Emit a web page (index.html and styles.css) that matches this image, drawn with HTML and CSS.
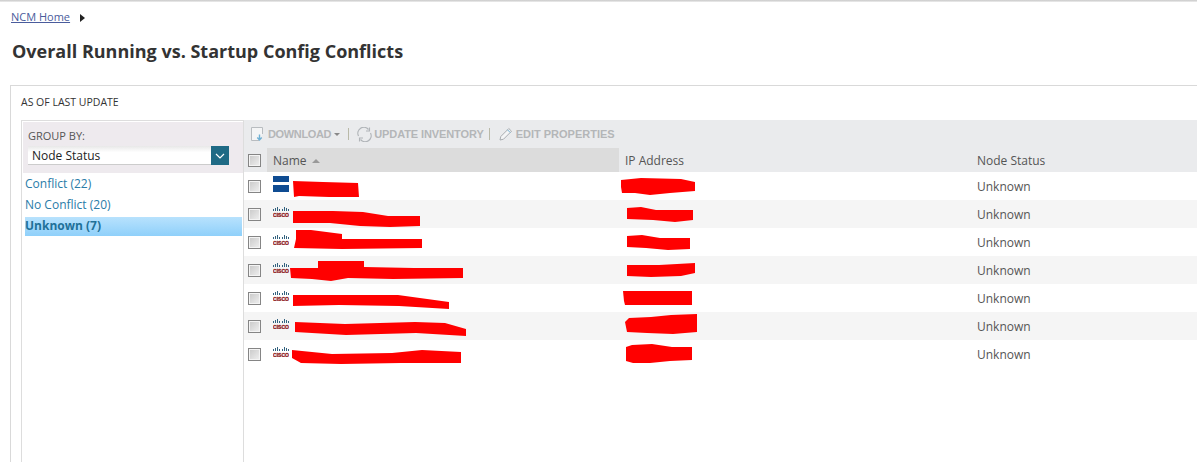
FILE: index.html
```html
<!DOCTYPE html>
<html lang="en">
<head>
    <meta charset="UTF-8">
    <title>Overall Running vs. Startup Config Conflicts</title>
    <link rel="stylesheet" href="styles.css">
</head>

<body>
    <div class="topline"></div>
    <div class="breadcrumb">
        <a href="#">NCM Home</a>
        <span class="crumb-arrow"></span>
    </div>
    <h1>Overall Running vs. Startup Config Conflicts</h1>

    <div class="panel">
        <div class="panel-title">AS OF LAST UPDATE</div>
        <div class="panel-body">
            <div class="group-col">
                <div class="group-head">
                    <label>GROUP BY:</label>
                    <div class="select">
                        <span class="select-value">Node Status</span>
                        <span class="select-btn">
                            <svg width="10" height="6" viewBox="0 0 10 6"><path d="M1 1l4 4 4-4" fill="none" stroke="#fff" stroke-width="1.2"/></svg>
                        </span>
                    </div>
                </div>
                <ul class="group-list">
                    <li>Conflict (22)</li>
                    <li>No Conflict (20)</li>
                    <li class="selected">Unknown (7)</li>
                </ul>
            </div>

            <div class="grid-col">
                <div class="toolbar">
                    <span class="tool tool-download">
                        <svg width="14" height="15" viewBox="0 0 14 15"><path d="M8 13.500H.5v-13h11V7" fill="#f4f5f6" stroke="#b8bcc0"/><path d="M8.500 7.500v5M6.300 10.500l2.200 2.500 2.200-2.500" fill="none" stroke="#6fb0d4" stroke-width="1.400"/></svg>
                        <span class="tool-label">DOWNLOAD</span><span class="caret"></span>
                    </span>
                    <span class="sep"></span>
                    <span class="tool tool-update">
                        <svg width="15" height="15" viewBox="0 0 15 15"><path d="M1.500 9A6 6 0 0 1 11.500 2.500M13.500 6A6 6 0 0 1 3.500 12.500" fill="none" stroke="#b0b4b8" stroke-width="1.200"/><path d="M12.500 .5v3.500H9M2.500 14.500V11H6" fill="none" stroke="#b0b4b8" stroke-width="1.100"/></svg>
                        UPDATE INVENTORY
                    </span>
                    <span class="sep sep-tight"></span>
                    <span class="tool">
                        <svg width="14" height="14" viewBox="0 0 14 14"><path d="M1 13l.8-3.500L9.800 1.500l2.700 2.700-8 8z" fill="#f4f5f6" stroke="#a8acb0"/><path d="M8.500 2.800l2.700 2.700" stroke="#6fb0d4"/></svg>
                        EDIT PROPERTIES
                    </span>
                </div>

                <table class="grid">
                    <thead>
                        <tr>
                            <th class="check-cell"><span class="check"></span></th>
                            <th class="sorted">Name <span class="sort-up"></span></th>
                            <th>IP Address</th>
                            <th>Node Status</th>
                        </tr>
                    </thead>
                    <tbody>
                        <tr>
                            <td class="check-cell"><span class="check"></span></td>
                            <td><svg class="vendor" width="16" height="16" viewBox="0 0 16 16"><rect y="0" width="16" height="6" fill="#0f4c92"/><rect y="9" width="16" height="7" fill="#0f4c92"/></svg></td>
                            <td></td>
                            <td>Unknown</td>
                        </tr>
                        <tr>
                            <td class="check-cell"><span class="check"></span></td>
                            <td><svg class="vendor" width="16" height="10" viewBox="0 0 16 10"><use href="#cisco"/></svg></td>
                            <td></td>
                            <td>Unknown</td>
                        </tr>
                        <tr>
                            <td class="check-cell"><span class="check"></span></td>
                            <td><svg class="vendor" width="16" height="10" viewBox="0 0 16 10"><use href="#cisco"/></svg></td>
                            <td></td>
                            <td>Unknown</td>
                        </tr>
                        <tr>
                            <td class="check-cell"><span class="check"></span></td>
                            <td><svg class="vendor" width="16" height="10" viewBox="0 0 16 10"><use href="#cisco"/></svg></td>
                            <td></td>
                            <td>Unknown</td>
                        </tr>
                        <tr>
                            <td class="check-cell"><span class="check"></span></td>
                            <td><svg class="vendor" width="16" height="10" viewBox="0 0 16 10"><use href="#cisco"/></svg></td>
                            <td></td>
                            <td>Unknown</td>
                        </tr>
                        <tr>
                            <td class="check-cell"><span class="check"></span></td>
                            <td><svg class="vendor" width="16" height="10" viewBox="0 0 16 10"><use href="#cisco"/></svg></td>
                            <td></td>
                            <td>Unknown</td>
                        </tr>
                        <tr>
                            <td class="check-cell"><span class="check"></span></td>
                            <td><svg class="vendor" width="16" height="10" viewBox="0 0 16 10"><use href="#cisco"/></svg></td>
                            <td></td>
                            <td>Unknown</td>
                        </tr>
                    </tbody>
                </table>

                <!-- red marker scribbles over names and addresses, page coords -->
                <svg class="redact" width="1197" height="462" viewBox="0 0 1197 462" fill="#f00">
                    <path d="M293 181l30 1 35 1 1 14-30 0-30-1-5 1z"/>
                    <path d="M293 211l40 0 30 1 25 4 32 0 0 10-30 1-30-1-30-3-37 0z"/>
                    <path d="M296 230l15 0 31 4 0 5 80 0 0 9-80 1-48-1 2-9z"/>
                    <path d="M318 261l46 0 0 6 50 1 49 0 0 10-70 1-45-1-17 3-19-2-21-1-1-10 28 0z"/>
                    <path d="M293 295l55 0 50 0 51 7 0 7-50-3-60-1-46 1z"/>
                    <path d="M295 322l50 2 70-2 30 1 21 6 0 7-50-3-70 2-51-3z"/>
                    <path d="M292 350l40 4 60-1 30-3 39 2 0 11-60 0-60 1-40-1-9-5z"/>

                    <path d="M621 180l20-2 40 1 14 3 0 9-25 2-20 2-15-2-13 0-1-6z"/>
                    <path d="M627 208l14-1 15 3 37 0 0 10-18 2-22-2-26-1z"/>
                    <path d="M627 236l15-1 18 3 30 0 0 11-22 1-22-2-19-1z"/>
                    <path d="M627 265l32 0 36-2 0 10-14 3-30 1-24-1z"/>
                    <path d="M623 291l69 0 0 14-67 0-1-4z"/>
                    <path d="M629 318l22-1 20-2 26-1 0 18-24 2-26-1-20-1-2-10z"/>
                    <path d="M626 347l6-2 20-1 20 3 20 0 0 13-22 1-20 2-17 0-7-2z"/>
                </svg>
            </div>
        </div>
    </div>

    <svg class="defs" width="0" height="0">
        <defs>
            <g id="cisco">
                <path d="M.5 2v2M2.500 1v3M4.500 0v4M6.500 2v2M9.500 2v2M11.500 0v4M13.500 1v3M15.500 2v2" stroke="#33627f" stroke-width="1" fill="none"/>
                <text x="0" y="9.500" textLength="16" lengthAdjust="spacingAndGlyphs" class="cisco-word">CISCO</text>
            </g>
        </defs>
    </svg>
</body>

</html>
```

FILE: styles.css
```css
html, body {
    height: 462px;
    overflow: hidden;
}

body {
    margin: 0;
    background-color: #fff;
    color: #333;
    font-family: 'Open Sans', sans-serif;
    font-size: 12px;
}

.topline {
    height: 2px;
    background: linear-gradient(#c8c8c8, #eee);
}

.breadcrumb {
    display: flex;
    align-items: center;
    height: 15px;
    margin: 7px 0 0 11px;
    font-size: 11px;
}

.breadcrumb a {
    color: #4a5c9c;
}

.crumb-arrow {
    width: 0;
    height: 0;
    margin: 3px 0 0 10px;
    border-left: 5px solid #222;
    border-top: 4px solid transparent;
    border-bottom: 4px solid transparent;
}

h1 {
    margin: 9px 0 0 12px;
    height: 36px;
    color: #333;
    font-size: 18px;
    font-weight: 700;
    line-height: 36px;
}

/* panel runs off the window on the right and bottom, so no border there */
.panel {
    position: relative;
    box-sizing: border-box;
    height: 377px;
    margin: 16px 0 0 10px;
    padding: 0 0 0 10px;
    border-top: 1px solid #d9d9d9;
    border-left: 1px solid #d9d9d9;
}

.panel-title {
    height: 34px;
    color: #333;
    font-size: 10.5px;
    line-height: 33px;
}

.panel-body {
    display: flex;
    height: 342px;
}

.group-col {
    box-sizing: border-box;
    flex: none;
    width: 223px;
    padding: 0 0 0 1px;
    border: 1px solid #ddd;
    border-bottom: none;
}

.group-head {
    box-sizing: border-box;
    height: 51px;
    margin-top: 1px;
    padding: 6px 0 0 5px;
    background-color: #eeeaee;
}

.group-head label {
    display: block;
    height: 18px;
    color: #555;
    font-size: 11px;
    line-height: 16px;
}

.select {
    display: flex;
    width: 201px;
    height: 19px;
}

.select-value {
    flex: 1;
    padding-left: 4px;
    background: linear-gradient(#e8e8e8, #fff 35%);
    border-bottom: 1px solid #ccc;
    color: #222;
    line-height: 19px;
}

.select-btn {
    display: flex;
    flex: none;
    align-items: center;
    justify-content: center;
    width: 18px;
    background-color: #1f6a85;
}

.group-list {
    margin: -1px 0 0;
    padding: 0 1px 0 2px;
    list-style: none;
}

.group-list li {
    height: 21px;
    color: #2a7ca8;
    line-height: 23px;
}

.group-list .selected {
    height: 19px;
    margin-top: 3px;
    background: linear-gradient(#b8e2fd, #8fd0fa);
    color: #1f7199;
    font-weight: 700;
    line-height: 18px;
}

.grid-col {
    flex: 1;
    min-width: 0;
}

.toolbar {
    display: flex;
    align-items: center;
    box-sizing: border-box;
    height: 28px;
    padding-left: 7px;
    background-color: #eaebed;
    color: #b4b6b8;
    font-family: 'Liberation Sans', sans-serif;
    font-size: 11px;
    font-weight: 700;
}

.tool {
    display: flex;
    align-items: center;
    gap: 3px;
}

.tool-label {
    letter-spacing: -.35px;
}

.tool-update {
    gap: 2px;
    letter-spacing: -.1px;
}

.caret {
    width: 0;
    height: 0;
    margin-top: 1px;
    border-top: 3px solid #888;
    border-left: 3px solid transparent;
    border-right: 3px solid transparent;
}

.sep {
    width: 1px;
    height: 12px;
    margin: 0 8px 0 8px;
    background-color: #b9b9a8;
}

.sep-tight {
    margin: 0 9px 0 5px;
}

.grid {
    width: 100%;
    border-collapse: collapse;
    table-layout: fixed;
}

.grid th {
    height: 24px;
    padding: 0 0 0 6px;
    background-color: #eaebed;
    color: #555;
    font-weight: 400;
    text-align: left;
    width: 346px;
}

.grid th.check-cell {
    width: 23px;
    padding: 0 0 0 4px;
    box-sizing: border-box;
}

.grid th.sorted {
    background-color: #dcdcdc;
}

.grid th:last-child {
    width: auto;
}

.grid td {
    height: 28px;
    padding: 0 0 0 6px;
    color: #555;
}

.grid td.check-cell {
    padding: 0 0 0 4px;
}

.grid tbody tr:nth-child(even) td {
    background-color: #f5f5f5;
}

.check {
    display: block;
    box-sizing: border-box;
    width: 13px;
    height: 13px;
    border: 1px solid #858585;
    background: linear-gradient(135deg, #c8c8c8, #f0f0f0);
    box-shadow: inset 0 0 0 1px #f4f4f4;
}

.sort-up {
    display: inline-block;
    width: 0;
    height: 0;
    margin: 0 0 2px 2px;
    border-bottom: 4px solid #999;
    border-left: 4px solid transparent;
    border-right: 4px solid transparent;
}

.vendor {
    display: block;
    margin-bottom: 4px;
}

.cisco-word {
    fill: #8e1b22;
    stroke: #8e1b22;
    stroke-width: .3;
    font-family: 'Liberation Sans', sans-serif;
    font-size: 5px;
    font-weight: 700;
}

.redact {
    position: absolute;
    top: -86px;
    left: -11px;
    pointer-events: none;
}

.defs {
    position: absolute;
}
```
